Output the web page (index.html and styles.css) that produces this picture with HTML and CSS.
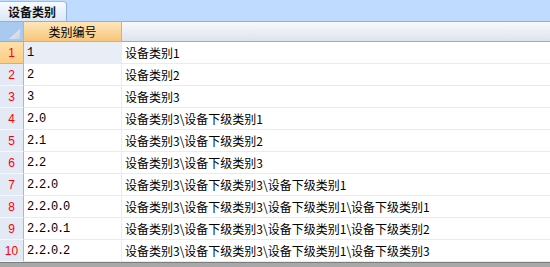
FILE: index.html
```html
<!DOCTYPE html>
<html>
<head>
<meta charset="utf-8">
<link rel="stylesheet" href="styles.css">
</head>
<body>
<div class="app">
  <div class="tabstrip"><div class="tab">设备类别</div></div>
  <div class="grid">
    <div class="hdr corner"><svg width="11" height="10" viewBox="0 0 11 10"><defs><linearGradient id="g" x1="0" y1="0" x2="1" y2="1"><stop offset="0" stop-color="#eef2f7"/><stop offset="1" stop-color="#c9d2dc"/></linearGradient></defs><polygon points="11,0 11,10 0,10" fill="url(#g)"/></svg></div>
    <div class="hdr hsel">类别编号</div>
    <div class="hdr hnorm"></div>

    <div class="rh rsel">1</div><div class="c1 focus">1</div><div class="c2">设备类别1</div>
    <div class="rh">2</div><div class="c1">2</div><div class="c2">设备类别2</div>
    <div class="rh">3</div><div class="c1">3</div><div class="c2">设备类别3</div>
    <div class="rh">4</div><div class="c1">2.0</div><div class="c2">设备类别3\设备下级类别1</div>
    <div class="rh">5</div><div class="c1">2.1</div><div class="c2">设备类别3\设备下级类别2</div>
    <div class="rh">6</div><div class="c1">2.2</div><div class="c2">设备类别3\设备下级类别3</div>
    <div class="rh">7</div><div class="c1">2.2.0</div><div class="c2">设备类别3\设备下级类别3\设备下级类别1</div>
    <div class="rh">8</div><div class="c1">2.2.0.0</div><div class="c2">设备类别3\设备下级类别3\设备下级类别1\设备下级类别1</div>
    <div class="rh">9</div><div class="c1">2.2.0.1</div><div class="c2">设备类别3\设备下级类别3\设备下级类别1\设备下级类别2</div>
    <div class="rh">10</div><div class="c1">2.2.0.2</div><div class="c2">设备类别3\设备下级类别3\设备下级类别1\设备下级类别3</div>
  </div>
  <div class="bottombar"></div>
</div>
</body>
</html>
```
FILE: styles.css
```css
* { box-sizing: border-box; }
html, body { margin: 0; padding: 0; }
body {
  width: 550px;
  height: 267px;
  overflow: hidden;
  background: #ffffff;
  font-family: "Noto Sans CJK SC", "Liberation Sans", sans-serif;
  font-size: 12px;
  color: #000;
}
.app { display: flex; flex-direction: column; height: 267px; }
.tabstrip {
  height: 21px;
  background: #bfdbff;
  display: flex;
  align-items: flex-end;
}
.tab {
  width: 67px;
  height: 20px;
  padding-left: 8px;
  font-weight: bold;
  font-size: 12px;
  line-height: 19px;
  background: linear-gradient(#f7faff, #dbe8f8);
  border-top: 1px solid #9fbce0;
  border-right: 1px solid #8eaed8;
  border-top-right-radius: 4px;
  color: #111;
}
.grid {
  display: grid;
  grid-template-columns: 24px 98px 1fr;
  grid-auto-rows: 22px;
  grid-template-rows: 21px;
}
.hdr {
  border-top: 1px solid #8fb0db;
  border-bottom: 1px solid #8fb0db;
  display: flex;
  align-items: center;
  justify-content: center;
}
.corner {
  background: #a9c9ef;
  border-right: 1px solid #f2a94a;
  justify-content: flex-end;
  align-items: flex-end;
  padding: 0 3px 2px 0;
}
.corner svg { display: block; }
.hsel {
  background: linear-gradient(#fde6ba, #f8c57a);
  border-right: 1px solid #f2a94a;
  border-bottom-color: #f2a94a;
  line-height: 19px;
}
.hnorm {
  background: linear-gradient(#f8f9fb, #dde3ee);
}
.rh {
  background: #e3eaf5;
  border-right: 1px solid #a5b8d0;
  border-bottom: 1px solid #f4f7fb;
  color: #ff0000;
  text-align: center;
  line-height: 22px;
  font-family: "Liberation Sans", sans-serif;
  font-size: 12px;
}
.rsel {
  background: linear-gradient(#fde0aa, #fbcd84);
  border-right: 1px solid #f2a94a;
  border-bottom: 1px solid #f2a94a;
}
.c1, .c2 {
  border-bottom: 1px solid #ebebeb;
  padding-left: 3px;
  line-height: 21px;
  white-space: nowrap;
  overflow: hidden;
}
.c1 {
  border-right: 1px solid #ebebeb;
  font-family: "Liberation Mono", monospace;
  letter-spacing: -1.2px;
  padding-top: 2px;
  line-height: 19px;
}
.focus { background: #e9edf6; }
.bottombar {
  flex: 1;
  background: #a8a8a8;
  border-top: 1px solid #7c7c7c;
}
```
